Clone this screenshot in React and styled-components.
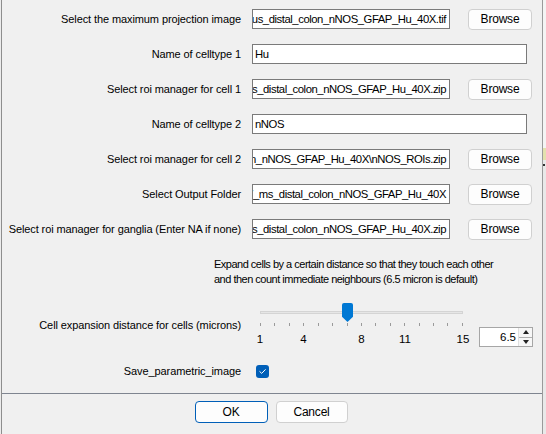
import React from 'react';
import styled, { createGlobalStyle } from 'styled-components';

const GlobalStyle = createGlobalStyle`
  html, body {
    margin: 0;
    padding: 0;
    background: #ececec;
  }
  body {
    font-family: "Liberation Sans", Arial, sans-serif;
  }
`

const Screen = styled.div`
  display: flex;
  width: 546px;
  height: 434px;
  overflow: hidden;
`

const Dialog = styled.div`
  width: 540px;
  margin-left: 1px;
  border-left: 1px solid #8e8e8e;
  border-right: 1px solid #9a9a9a;
  background: #f0f0f0;
  display: flex;
  flex-direction: column;
  font-size: 11px;
  letter-spacing: -0.1px;
  color: #000;
`

const Panel = styled.div`
  height: 394px;
  box-sizing: border-box;
  border-bottom: 1px solid #7f8590;
  padding-top: 9px;
  display: flex;
  flex-direction: column;
`

const FormGrid = styled.div`
  display: grid;
  grid-template-columns: 239px 1fr;
  grid-auto-rows: 20px;
  column-gap: 11px;
  row-gap: 15px;
  align-items: center;
`

const Label = styled.div`
  text-align: right;
  white-space: nowrap;
`

const Controls = styled.div`
  display: flex;
  align-items: ${p => p.$align || 'center'};
`

const Field = styled.div`
  width: ${p => (p.$wide ? '275px' : '198px')};
  height: 20px;
  box-sizing: border-box;
  border: 1px solid #7a7a7a;
  background: #fff;
  padding: 0 3px 0 2px;
  display: flex;
  align-items: center;
  justify-content: ${p => (p.$wide ? 'flex-start' : 'flex-end')};
  overflow: hidden;
  white-space: nowrap;
  font-size: 11.3px;
  letter-spacing: -0.45px;
`

const Button = styled.button`
  box-sizing: border-box;
  height: ${p => p.$h || 21}px;
  width: ${p => p.$w || 64}px;
  margin-left: ${p => p.$ml || 0}px;
  border: 1px solid ${p => (p.$primary ? '#005fb8' : '#d0d0d0')};
  border-radius: 4px;
  background: #fdfdfd;
  font-family: "Liberation Sans", Arial, sans-serif;
  font-size: 12px;
  letter-spacing: -0.2px;
  color: #000;
  padding: 0;
`

const Description = styled.div`
  margin-top: 18px;
  padding-left: 212px;
  line-height: 15px;
  white-space: nowrap;
  letter-spacing: -0.5px;
`

const SliderGrid = styled(FormGrid)`
  grid-auto-rows: auto;
  margin-top: 16px;
`

const Slider = styled.div`
  width: 218px;
  box-sizing: border-box;
  padding: 0 7px 0 8px;
  height: 44px;
`

const TrackArea = styled.div`
  position: relative;
  height: 19px;
`

const Track = styled.div`
  position: relative;
  top: 8px;
  height: 3px;
  box-sizing: border-box;
  background: #e6e6e6;
  border: 1px solid #d4d4d4;
`

const Thumb = styled.div`
  position: absolute;
  top: 0;
  width: 11px;
  height: 19px;
  margin-left: -5px;
  background: #0078d4;
  border-radius: 2px 2px 0 0;
  clip-path: polygon(0 0, 100% 0, 100% 72%, 50% 100%, 0 72%);
`

const Ticks = styled.div`
  display: flex;
  justify-content: space-between;
  height: 3px;
  margin-top: 1px;
`

const Tick = styled.div`
  width: 1px;
  height: 3px;
  background: #9a9a9a;
`

const TickLabels = styled.div`
  position: relative;
  height: 14px;
  margin-top: 7px;
`

const TickLabel = styled.span`
  position: absolute;
  top: 0;
  transform: translateX(-50%);
  font-size: 11.5px;
  letter-spacing: 0;
`

const Spinner = styled.div`
  display: flex;
  width: 54px;
  height: 20px;
  box-sizing: border-box;
  border: 1px solid #a6a6a6;
  background: #fff;
  margin: 24px 0 0 9px;
`

const SpinValue = styled.div`
  flex: 1;
  text-align: right;
  line-height: 18px;
  padding-right: 2px;
  font-size: 11.5px;
  letter-spacing: 0;
`

const SpinArrows = styled.div`
  width: 13px;
  display: flex;
  flex-direction: column;
  border-left: 1px solid #e0e0e0;
`

const SpinHalf = styled.div`
  flex: 1;
  display: flex;
  align-items: center;
  justify-content: center;
  background: #f7f7f7;
  border-bottom: ${p => (p.$top ? '1px solid #b0b0b0' : 'none')};
`

const Arrow = styled.div`
  width: 0;
  height: 0;
  border-left: 3px solid transparent;
  border-right: 3px solid transparent;
  ${p => (p.$up ? 'border-bottom: 4px solid #222;' : 'border-top: 4px solid #222;')}
`

const CheckGrid = styled(FormGrid)`
  margin-top: 14px;
`

const Checkbox = styled.div`
  width: 13px;
  height: 13px;
  margin-left: 4px;
  border-radius: 3px;
  background: #005fb8;
  display: flex;
  align-items: center;
  justify-content: center;
`

const ButtonBar = styled.div`
  display: flex;
  justify-content: center;
  gap: 8px;
  padding: 7px 2px 0 0;
`

const Backdrop = styled.div`
  flex: 1;
  display: flex;
  flex-direction: column;
  background: #e9e9e9;
`

const BackdropBlock = styled.div`
  height: ${p => p.$h}px;
  margin-top: ${p => p.$mt || 0}px;
  width: ${p => p.$w || 3}px;
  background: ${p => p.$bg};
`

const rows = [
  { label: 'Select the maximum projection image', value: 'us_distal_colon_nNOS_GFAP_Hu_40X.tif', browse: true },
  { label: 'Name of celltype 1', value: 'Hu' },
  { label: 'Select roi manager for cell 1', value: 'us_distal_colon_nNOS_GFAP_Hu_40X.zip', browse: true },
  { label: 'Name of celltype 2', value: 'nNOS' },
  { label: 'Select roi manager for cell 2', value: 'on_nNOS_GFAP_Hu_40X\\nNOS_ROIs.zip', browse: true },
  { label: 'Select Output Folder', value: '7_ms_distal_colon_nNOS_GFAP_Hu_40X', browse: true },
  { label: 'Select roi manager for ganglia (Enter NA if none)', value: 'us_distal_colon_nNOS_GFAP_Hu_40X.zip', browse: true },
];

const MIN = 1;
const MAX = 15;
const value = 6.5;
const tickValues = Array.from({ length: MAX - MIN + 1 }, (_, i) => i + MIN);
const labelValues = [1, 4, 8, 11, 15];
const pct = v => `${((v - MIN) / (MAX - MIN)) * 100}%`;

function CheckMark() {
  return (
    <svg width="9" height="9" viewBox="0 0 9 9">
      <path d="M1.8 4.6 L3.7 6.4 L7.3 2.6" fill="none" stroke="#fff" strokeWidth="1" strokeLinecap="round" strokeLinejoin="round" />
    </svg>
  );
}

export default function App() {
  return (
    <Screen>
      <GlobalStyle />
      <Dialog>
        <Panel>
          <FormGrid>
            {rows.map(r => (
              <React.Fragment key={r.label}>
                <Label>{r.label}</Label>
                <Controls>
                  <Field $wide={!r.browse}>
                    <span>{r.value}</span>
                  </Field>
                  {r.browse && <Button $ml={18}>Browse</Button>}
                </Controls>
              </React.Fragment>
            ))}
          </FormGrid>

          <Description>
            Expand cells by a certain distance so that they touch each other
            <br />
            and then count immediate neighbours (6.5 micron is default)
          </Description>

          <SliderGrid>
            <Label>Cell expansion distance for cells (microns)</Label>
            <Controls $align="flex-start">
              <Slider>
                <TrackArea>
                  <Track />
                  <Thumb style={{ left: pct(Math.round(value)) }} />
                </TrackArea>
                <Ticks>
                  {tickValues.map(v => <Tick key={v} />)}
                </Ticks>
                <TickLabels>
                  {labelValues.map(v => (
                    <TickLabel key={v} style={{ left: pct(v) }}>{v}</TickLabel>
                  ))}
                </TickLabels>
              </Slider>
              <Spinner>
                <SpinValue>{value}</SpinValue>
                <SpinArrows>
                  <SpinHalf $top><Arrow $up /></SpinHalf>
                  <SpinHalf><Arrow /></SpinHalf>
                </SpinArrows>
              </Spinner>
            </Controls>
          </SliderGrid>

          <CheckGrid>
            <Label>Save_parametric_image</Label>
            <Controls>
              <Checkbox><CheckMark /></Checkbox>
            </Controls>
          </CheckGrid>
        </Panel>
        <ButtonBar>
          <Button $primary $w={73} $h={22}>OK</Button>
          <Button $w={72} $h={22}>Cancel</Button>
        </ButtonBar>
      </Dialog>
      <Backdrop>
        <BackdropBlock $h={148} $bg="#f4f4f4" />
        <BackdropBlock $h={12} $bg="#e3e1ae" />
        <BackdropBlock $h={2} $mt={4} $w={2} $bg="#333" />
      </Backdrop>
    </Screen>
  );
}
